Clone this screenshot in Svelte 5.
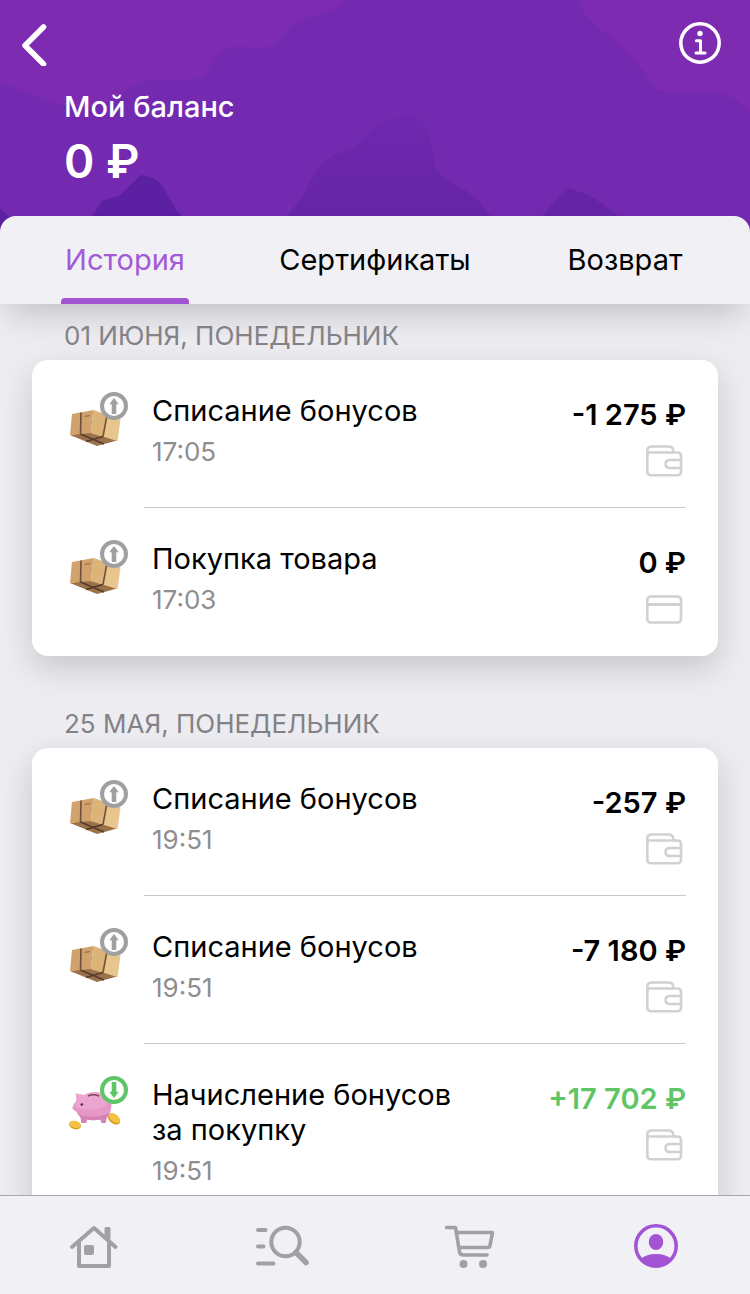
<script>
	const tabs = [
		{ id: 'history', label: 'История' },
		{ id: 'certificates', label: 'Сертификаты' },
		{ id: 'refund', label: 'Возврат' }
	];

	const groups = [
		{
			date: '01 июня, понедельник',
			operations: [
				{ title: 'Списание бонусов', time: '17:05', amount: '-1 275 ₽', type: 'out', source: 'wallet' },
				{ title: 'Покупка товара', time: '17:03', amount: '0 ₽', type: 'out', source: 'card' }
			]
		},
		{
			date: '25 мая, понедельник',
			operations: [
				{ title: 'Списание бонусов', time: '19:51', amount: '-257 ₽', type: 'out', source: 'wallet' },
				{ title: 'Списание бонусов', time: '19:51', amount: '-7 180 ₽', type: 'out', source: 'wallet' },
				{
					title: 'Начисление бонусов за\u00a0покупку',
					time: '19:51',
					amount: '+17 702 ₽',
					type: 'in',
					source: 'wallet'
				}
			]
		}
	];

	const navItems = [
		{ id: 'home', label: 'Главная' },
		{ id: 'catalog', label: 'Каталог' },
		{ id: 'cart', label: 'Корзина' },
		{ id: 'profile', label: 'Профиль' }
	];

	let activeTab = 'history';
	let activeNav = 'profile';
</script>

<div class="screen">
	<header class="header">
		<svg class="mountains" viewBox="0 0 750 232" preserveAspectRatio="none" aria-hidden="true">
			<defs>
				<linearGradient id="fade" x1="0" y1="0" x2="0" y2="1">
					<stop offset="0" stop-color="#6e29ae" />
					<stop offset="1" stop-color="#6423a5" />
				</linearGradient>
			</defs>
			<path
				fill="#7d2cb2"
				d="M0 0H345C333 14 312 14 297 22C285 29 282 45 266 47C250 49 232 43 220 52C208 62 213 76 193 79C175 82 160 76 142 82C122 89 112 106 85 107C50 108 38 91 0 84Z"
			/>
			<path fill="#7d2cb2" d="M580 0C582 21 605 29 621 46C637 62 646 73 657 90C680 93 711 88 726 94C736 98 742 105 750 111V0Z" />
			<path
				fill="url(#fade)"
				d="M278 232C290 210 303 198 309 184C316 167 325 157 344 151C362 145 368 132 376 124C386 116 404 117 420 117C433 133 432 151 437 171C449 182 465 188 477 199L503 232Z"
			/>
			<path fill="#6424a5" d="M530 232L552 204L569 188L591 196L616 214L632 232Z" />
			<path fill="#5b21a2" d="M82 232L101 202Q106 198 119 196L141 175Q159 177 166 192L176 210L198 232ZM0 209L12 219L24 232H0Z" />
		</svg>

		<div class="top-bar">
			<button class="icon-button" aria-label="Назад">
				<svg width="28" height="44" viewBox="0 0 28 44">
					<path
						d="M23.500 5L5 23.500L23.500 42"
						fill="none"
						stroke="white"
						stroke-width="5.500"
						stroke-linecap="round"
						stroke-linejoin="round"
					/>
				</svg>
			</button>
			<button class="icon-button" aria-label="Информация">
				<svg width="44" height="44" viewBox="0 0 44 44">
					<circle cx="22" cy="21" r="19.200" fill="none" stroke="white" stroke-width="3.500" />
					<circle cx="22" cy="11.500" r="2.700" fill="white" />
					<path
						d="M18.400 18.700H22.500V31M18 31H27"
						fill="none"
						stroke="white"
						stroke-width="3"
						stroke-linecap="round"
						stroke-linejoin="round"
					/>
				</svg>
			</button>
		</div>

		<div class="balance">
			<h1 class="balance-title">Мой баланс</h1>
			<div class="balance-value">0 ₽</div>
		</div>

		<div class="tabs" role="tablist">
			{#each tabs as tab}
				<button
					class="tab"
					class:active={activeTab === tab.id}
					role="tab"
					aria-selected={activeTab === tab.id}
					on:click={() => (activeTab = tab.id)}
				>
					<span class="tab-label">{tab.label}</span>
				</button>
			{/each}
		</div>
	</header>

	<main class="history">
		{#each groups as group}
			<section class="group">
				<h2 class="group-date">{group.date}</h2>
				<ul class="card">
					{#each group.operations as operation}
						<li class="operation">
							<div class="operation-icon">
								<svg width="64" height="64" viewBox="0 0 64 64" aria-hidden="true">
									{#if operation.type === 'in'}
										<ellipse cx="50" cy="43" rx="7" ry="4.400" transform="rotate(38 50 43)" fill="#d99b1d" />
										<ellipse cx="50.500" cy="42" rx="6.600" ry="3.800" transform="rotate(38 50.500 42)" fill="#f3c243" />
										<path
											fill="#e796c8"
											d="M11.500 17.500L20 19Q25 16 31 16Q46 17 47.500 29Q47 38 42.500 42L41.500 47H37.500L36.500 43.500Q29 45 23 43.500L22 47H17.500L16.500 41Q13.500 39 12.500 36L8.500 33Q8 30 12 25.500Q13 22 11.500 17.500Z"
										/>
										<path
											fill="#f2b2d9"
											d="M11.500 17.500L20 19Q25 16 31 16Q43 17 46 26Q38 34 27 34Q17 34 12 31V25.500Q13 22 11.500 17.500Z"
											opacity="0.5"
										/>
										<path fill="#d583b4" d="M14 38Q30 44 45 37Q44 40.500 42.500 42L41.500 47H37.500L36.500 43.500Q29 45 23 43.500L22 47H17.500L16.500 41Z" />
										<path d="M24 20Q29 17.500 35 20" fill="none" stroke="#76465f" stroke-width="1.500" />
										<circle cx="17.800" cy="28.500" r="1.300" fill="#4b2e42" />
										<ellipse cx="11" cy="49.200" rx="6" ry="4" transform="rotate(15 11 49.200)" fill="#d99b1d" />
										<ellipse cx="11" cy="48.400" rx="6" ry="3.400" transform="rotate(15 11 48.400)" fill="#f3c243" />
									{:else}
										<path fill="#9a7148" d="M6 43L27 40L53 48.500L33 54Z" />
										<path fill="#cfa36b" d="M8 22L29.500 18L27 41L6 43Z" />
										<path fill="#e9c68e" d="M29.500 18L56.500 27.500L53.500 49L27 41Z" />
										<path fill="#dcb47a" d="M29.500 18L42 22.500L38.500 44.500L27 41Z" />
										<path d="M17 20.500L16.500 42M43 23L39 44.500" fill="none" stroke="#70503a" stroke-width="1.600" />
										<path d="M16.500 42L40 52M39 44.500L22 49.500" fill="none" stroke="#553a2b" stroke-width="1.400" />
										<path d="M20.500 24.500L26 23.500" stroke="#a27c4e" stroke-width="1.500" />
									{/if}
									<circle
										cx="50"
										cy="14"
										r="12"
										fill="white"
										stroke={operation.type === 'in' ? '#5fc566' : '#a0a0a1'}
										stroke-width="4"
									/>
									<path
										d="M50 6L54.800 12.200H52.300V22H47.700V12.200H45.200Z"
										transform={operation.type === 'in' ? 'rotate(180 50 14)' : undefined}
										fill={operation.type === 'in' ? '#5fc566' : '#a0a0a1'}
									/>
								</svg>
							</div>
							<div class="operation-body">
								<div class="operation-text">
									<div class="operation-title">{operation.title}</div>
									<time class="operation-time">{operation.time}</time>
								</div>
								<div class="operation-sum">
									<div class="operation-amount" class:income={operation.type === 'in'}>
										{operation.amount}
									</div>
									<svg width="44" height="36" viewBox="0 0 44 36" aria-hidden="true">
										<g fill="none" stroke="#d1d1d3" stroke-width="2.600" stroke-linejoin="round">
											{#if operation.source === 'wallet'}
												<path d="M5.300 13V8Q5.300 3.500 9.500 3.500H27Q31.500 3.500 31.500 9.500" />
												<path d="M5.300 9.500H35.500Q39 9.500 39 13V28.500Q39 32.300 35 32.300H9.500Q5.300 32.300 5.300 28.500V9.500Z" />
												<path d="M39 17H28Q23.500 17 23.500 21Q23.500 25 28 25H39" />
											{:else}
												<rect x="5.300" y="5.500" width="33.700" height="26" rx="3.500" />
												<path d="M5.300 13.500H39" stroke-width="3.200" />
											{/if}
										</g>
									</svg>
								</div>
							</div>
						</li>
					{/each}
				</ul>
			</section>
		{/each}
	</main>

	<nav class="bottom-nav">
		{#each navItems as item}
			<button
				class="nav-item"
				class:active={activeNav === item.id}
				aria-label={item.label}
				on:click={() => (activeNav = item.id)}
			>
				<svg width="56" height="48" viewBox="0 0 56 48" fill="none" stroke="currentColor" stroke-width="4" stroke-linecap="round" stroke-linejoin="round">
					{#if item.id === 'home'}
						<path d="M6 25L28 6L49.500 25" />
						<path d="M13 21V44H43V21" />
						<path d="M40 6.500V14L43 17V6.500Z" fill="currentColor" stroke-width="3" />
						<rect x="18" y="23" width="10" height="10" rx="2" fill="currentColor" stroke="none" />
					{:else if item.id === 'catalog'}
						<circle cx="32.500" cy="20" r="14.200" />
						<path d="M43 30.500L53 40.500" stroke-width="5.500" />
						<path d="M5 8H12.500M5 24.500H10.500M5 41.500H20.500" />
					{:else if item.id === 'cart'}
						<path d="M5.500 5.500H14.500L18.500 30Q19.200 33 22.500 33H46" stroke-width="3.600" />
						<path d="M16 10.500H51.500L49 23.500Q48.700 25.500 46.500 25.500H18.500" stroke-width="3.600" />
						<circle cx="22.500" cy="42" r="4" fill="currentColor" stroke="none" />
						<circle cx="42" cy="42" r="4" fill="currentColor" stroke="none" />
					{:else}
						<circle cx="28" cy="24" r="20.200" stroke-width="3.600" />
						<ellipse cx="28" cy="20" rx="7.200" ry="8" fill="currentColor" stroke="none" />
						<path d="M13 37Q18 32 28 32Q38 32 43 37Q37 44 28 44Q19 44 13 37Z" fill="currentColor" stroke="none" />
					{/if}
				</svg>
			</button>
		{/each}
	</nav>
</div>

<style>
	:global(body) {
		background: #edecf1;
	}

	.screen {
		display: flex;
		flex-direction: column;
		height: 100vh;
		overflow: hidden;
		background: #edecf1;
		color: #000;
		font-family: Inter, 'Noto Sans', sans-serif;
	}

	button {
		padding: 0;
		border: none;
		background: none;
		color: inherit;
		font: inherit;
		cursor: pointer;
	}

	svg {
		display: block;
	}

	/* Header */
	.header {
		position: relative;
		flex: none;
		background: #742ab0;
		color: white;
	}

	.mountains {
		position: absolute;
		top: 0;
		left: 0;
		width: 100%;
		height: 232px;
	}

	.top-bar {
		position: relative;
		display: flex;
		justify-content: space-between;
		align-items: center;
		height: 88px;
		padding: 0 28px 0 20px;
	}

	.balance {
		position: relative;
		height: 128px;
		padding: 1px 64px 0;
		box-sizing: border-box;
	}

	.balance-title {
		margin: 0 0 4px;
		font-size: 29px;
		line-height: 36px;
		font-weight: 500;
	}

	.balance-value {
		font-size: 46px;
		line-height: 64px;
		font-weight: 600;
	}

	/* Tabs */
	.tabs {
		position: relative;
		display: grid;
		grid-template-columns: repeat(3, 1fr);
		border-radius: 16px 16px 0 0;
		background: #f1f0f5;
		box-shadow: 0 18px 32px -8px rgba(0, 0, 0, 0.18);
	}

	.tab {
		color: #000;
		font-size: 29px;
		line-height: 88px;
	}

	.tab-label {
		position: relative;
		display: inline-block;
		padding: 0 4px;
	}

	.tab.active {
		color: #a25ad6;
	}

	.tab.active .tab-label::after {
		content: '';
		position: absolute;
		right: 0;
		bottom: 0;
		left: 0;
		height: 6px;
		border-radius: 4px 4px 0 0;
		background: #a254d4;
	}

	/* History */
	.history {
		flex: 1;
		min-height: 0;
		overflow-y: auto;
		scrollbar-width: none;
	}

	.group {
		padding: 16px 32px 36px;
	}

	.group-date {
		position: relative;
		margin: 0 0 8px;
		padding: 0 32px;
		color: #838287;
		font-size: 26px;
		line-height: 32px;
		font-weight: 400;
		text-transform: uppercase;
	}

	.card {
		position: relative;
		margin: 0;
		padding: 0;
		list-style: none;
		border-radius: 16px;
		background: white;
		box-shadow: 0 12px 32px rgba(0, 0, 0, 0.16);
	}

	.operation {
		display: flex;
		padding-right: 32px;
	}

	.operation-icon {
		flex: none;
		width: 80px;
		padding: 32px 0 0 32px;
	}

	.operation-body {
		display: flex;
		flex: 1;
		gap: 16px;
		padding: 33px 0 28px 8px;
		border-bottom: 1px solid #c8c8cb;
	}

	.operation:last-child .operation-body {
		border-bottom-color: transparent;
	}

	.operation-text {
		flex: 1;
	}

	.operation-title {
		margin-bottom: 8px;
		font-size: 29px;
		line-height: 35px;
	}

	.operation-time {
		display: block;
		color: #8e8e90;
		font-size: 26px;
		line-height: 32px;
	}

	.operation-sum {
		display: flex;
		flex-direction: column;
		align-items: flex-end;
		gap: 10px;
		padding-top: 4px;
	}

	.operation-amount {
		font-size: 29px;
		line-height: 36px;
		font-weight: 600;
		white-space: nowrap;
	}

	.operation-amount.income {
		color: #5fc566;
	}

	/* Bottom navigation */
	.bottom-nav {
		position: relative;
		display: grid;
		flex: none;
		grid-template-columns: repeat(4, 1fr);
		height: 96px;
		padding-top: 2px;
		border-top: 1px solid #a9a9ad;
		background: #f1f0f5;
	}

	.nav-item {
		display: flex;
		justify-content: center;
		align-items: center;
		color: #a1a1a3;
	}

	.nav-item.active {
		color: #a254d4;
	}
</style>
